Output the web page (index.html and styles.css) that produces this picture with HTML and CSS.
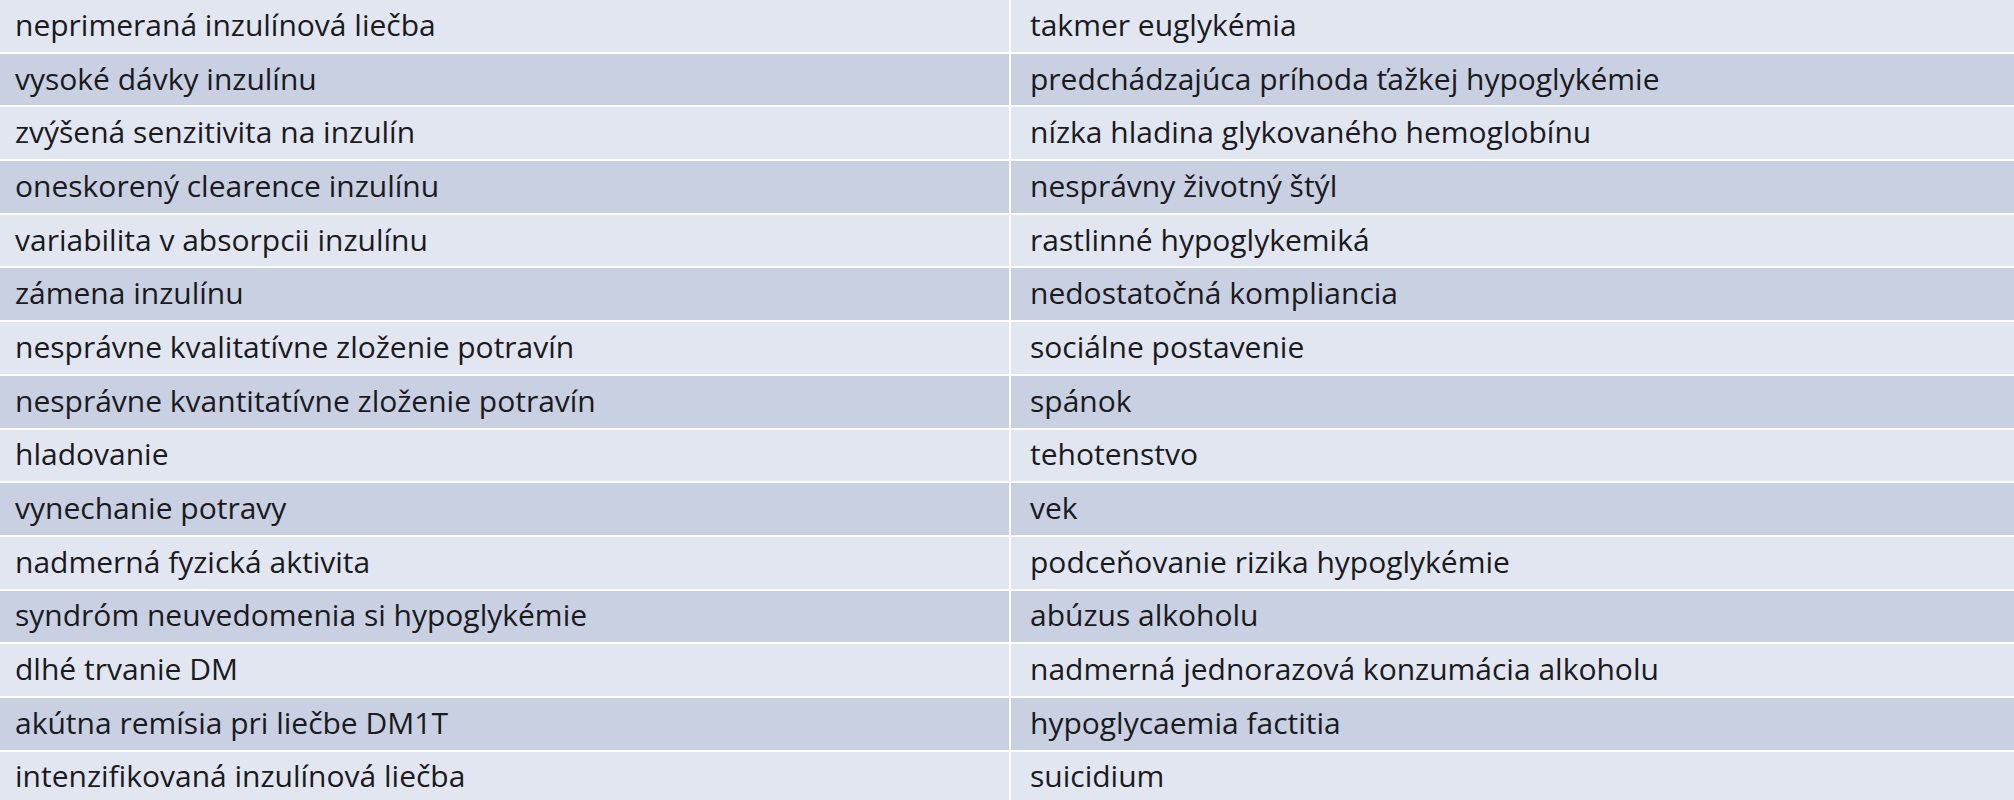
FILE: index.html
```html
<!DOCTYPE html>
<html lang="sk">
<head>
<meta charset="utf-8">
<title>Rizikové faktory hypoglykémie</title>
<link rel="stylesheet" href="styles.css">
</head>
<body>
<div class="table">
  <div class="row light"><div class="cell left">neprimeraná inzulínová liečba</div><div class="cell right">takmer euglykémia</div></div>
  <div class="row dark"><div class="cell left">vysoké dávky inzulínu</div><div class="cell right">predchádzajúca príhoda ťažkej hypoglykémie</div></div>
  <div class="row light"><div class="cell left">zvýšená senzitivita na inzulín</div><div class="cell right">nízka hladina glykovaného hemoglobínu</div></div>
  <div class="row dark"><div class="cell left">oneskorený clearence inzulínu</div><div class="cell right">nesprávny životný štýl</div></div>
  <div class="row light"><div class="cell left">variabilita v absorpcii inzulínu</div><div class="cell right">rastlinné hypoglykemiká</div></div>
  <div class="row dark"><div class="cell left">zámena inzulínu</div><div class="cell right">nedostatočná kompliancia</div></div>
  <div class="row light"><div class="cell left">nesprávne kvalitatívne zloženie potravín</div><div class="cell right">sociálne postavenie</div></div>
  <div class="row dark"><div class="cell left">nesprávne kvantitatívne zloženie potravín</div><div class="cell right">spánok</div></div>
  <div class="row light"><div class="cell left">hladovanie</div><div class="cell right">tehotenstvo</div></div>
  <div class="row dark"><div class="cell left">vynechanie potravy</div><div class="cell right">vek</div></div>
  <div class="row light"><div class="cell left">nadmerná fyzická aktivita</div><div class="cell right">podceňovanie rizika hypoglykémie</div></div>
  <div class="row dark"><div class="cell left">syndróm neuvedomenia si hypoglykémie</div><div class="cell right">abúzus alkoholu</div></div>
  <div class="row light"><div class="cell left">dlhé trvanie DM</div><div class="cell right">nadmerná jednorazová konzumácia alkoholu</div></div>
  <div class="row dark"><div class="cell left">akútna remísia pri liečbe DM1T</div><div class="cell right">hypoglycaemia factitia</div></div>
  <div class="row light"><div class="cell left">intenzifikovaná inzulínová liečba</div><div class="cell right">suicidium</div></div>
</div>
</body>
</html>
```

FILE: styles.css
```css
html, body {
  margin: 0;
  padding: 0;
  background: #ffffff;
}

body {
  font-family: "Open Sans", "Noto Sans", "Liberation Sans", sans-serif;
  font-size: 30px;
  color: #1a1a20;
  overflow: hidden;
}

.table {
  display: flex;
  flex-direction: column;
  gap: 2px;
  width: 2014px;
  background: #ffffff;
}

.row {
  display: grid;
  grid-template-columns: 1009px 1fr;
  column-gap: 2px;
  height: 51.7px;
  flex-shrink: 0;
}

.cell {
  display: flex;
  align-items: center;
  white-space: nowrap;
  padding-bottom: 3px;
  box-sizing: border-box;
}

.left {
  padding-left: 15px;
}

.right {
  padding-left: 19px;
}

.light .cell {
  background: #e1e6f0;
}

.dark .cell {
  background: #c8d0e2;
}
```
